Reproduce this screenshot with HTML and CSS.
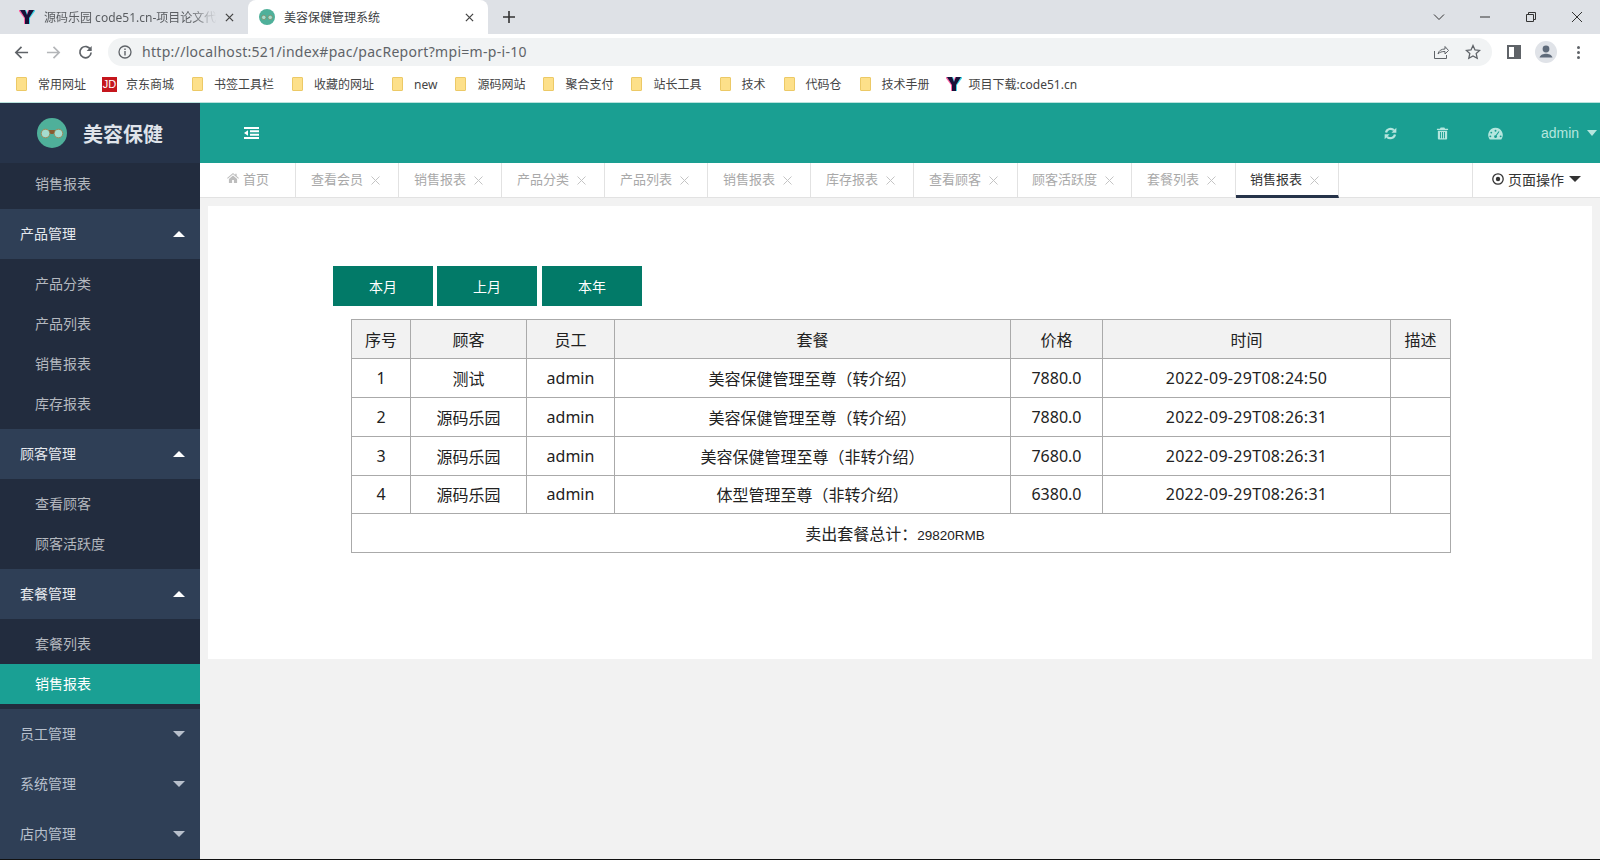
FILE: index.html
```html
<!DOCTYPE html>
<html lang="en">
<head>
    <meta charset="UTF-8">
    <meta name="viewport" content="width=device-width, initial-scale=1.0">
    <title>美容保健管理系统</title>
    <link rel="stylesheet" href="styles.css">
</head>
<body>

    <!-- Browser tabs -->
    <div class="tabstrip">
        <div class="btab">
            <svg class="fav" viewBox="0 0 16 16"><path d="M0 1h6l2 5 2-5h6L10 9v6H6V9z" fill="#ff5fa0" transform="translate(-1 0)"/><path d="M0 1h6l2 5 2-5h6L10 9v6H6V9z" fill="#3fd6e8" transform="translate(1 0)"/><path d="M1 1h5l2 5 2-5h5L10 9v6H6V9z" fill="#1a1038"/></svg>
            <span class="btab-title fade">源码乐园 code51.cn-项目论文代码</span>
            <svg class="btab-x" viewBox="0 0 10 10"><path d="M1 1l8 8M9 1l-8 8" stroke="#444" stroke-width="1.4"/></svg>
        </div>
        <div class="btab btab-on">
            <svg class="fav" viewBox="0 0 16 16"><circle cx="8" cy="8" r="8" fill="#4fb09a"/><circle cx="4.800" cy="8.400" r="2.200" fill="#a5dccf" stroke="#8a7a50" stroke-width=".6"/><circle cx="11.200" cy="8.400" r="2.200" fill="#a5dccf" stroke="#8a7a50" stroke-width=".6"/></svg>
            <span class="btab-title">美容保健管理系统</span>
            <svg class="btab-x" viewBox="0 0 10 10"><path d="M1 1l8 8M9 1l-8 8" stroke="#444" stroke-width="1.4"/></svg>
        </div>
        <svg class="newtab" viewBox="0 0 12 12"><path d="M6 0v12M0 6h12" stroke="#333" stroke-width="1.6"/></svg>
        <div class="winbtns">
            <svg viewBox="0 0 12 12" class="win"><path d="M1 3.500l5 5 5-5" fill="none" stroke="#333"/></svg>
            <svg viewBox="0 0 12 12" class="win"><path d="M1 6h10" stroke="#333"/></svg>
            <svg viewBox="0 0 12 12" class="win"><path d="M1.500 3.500h7v7h-7zM3.500 3.500v-2h7v7h-2" fill="none" stroke="#333"/></svg>
            <svg viewBox="0 0 12 12" class="win"><path d="M1 1l10 10M11 1L1 11" stroke="#333"/></svg>
        </div>
    </div>

    <!-- Address bar -->
    <div class="toolbar">
        <svg class="nav-ico" viewBox="0 0 16 16"><path d="M15 8H2M8 2L2 8l6 6" fill="none" stroke="#5f6368" stroke-width="1.8"/></svg>
        <svg class="nav-ico" viewBox="0 0 16 16"><path d="M1 8h13M8 2l6 6-6 6" fill="none" stroke="#b4b6b9" stroke-width="1.8"/></svg>
        <svg class="nav-ico" viewBox="0 0 16 16"><path d="M13.500 5.200A6 6 0 1 0 14 8" fill="none" stroke="#5f6368" stroke-width="1.8"/><path d="M14.600 1v5.400H9.200z" fill="#5f6368"/></svg>
        <div class="omnibox">
            <svg class="info" viewBox="0 0 14 14"><circle cx="7" cy="7" r="6" fill="none" stroke="#5f6368" stroke-width="1.3"/><path d="M7 6v4.400M7 3.400v1.600" stroke="#5f6368" stroke-width="1.4"/></svg>
            <span class="url">http://localhost:521/index#pac/pacReport?mpi=m-p-i-10</span>
            <svg class="omni-ico" viewBox="0 0 16 16"><path d="M1.500 7v7.500h12V11M5 10c.6-3.300 3.400-5 7-5V2.500L15.500 6.500 12 10V7.500c-3 0-5.400.6-7 2.500z" fill="none" stroke="#5f6368"/></svg>
            <svg class="omni-ico" viewBox="0 0 16 16"><path d="M8 1.500l2 4.400 4.700.5-3.500 3.200 1 4.700L8 11.900l-4.200 2.400 1-4.700L1.300 6.400 6 5.900z" fill="none" stroke="#5f6368" stroke-width="1.300"/></svg>
        </div>
        <div class="sidepanel"></div>
        <div class="avatar"><svg viewBox="0 0 22 22"><circle cx="11" cy="8" r="3.400" fill="#5f6b7a"/><path d="M4.500 16.500c1-3 4-3.800 6.500-3.800s5.500.8 6.500 3.800z" fill="#5f6b7a"/></svg></div>
        <div class="kebab"><i></i><i></i><i></i></div>
    </div>

    <!-- Bookmarks -->
    <div class="bookmarks">
        <span class="bm"><i class="folder"></i>常用网址</span>
        <span class="bm bm-jd"><i class="jd">JD</i>京东商城</span>
        <span class="bm"><i class="folder"></i>书签工具栏</span>
        <span class="bm"><i class="folder"></i>收藏的网址</span>
        <span class="bm"><i class="folder"></i>new</span>
        <span class="bm"><i class="folder"></i>源码网站</span>
        <span class="bm"><i class="folder"></i>聚合支付</span>
        <span class="bm"><i class="folder"></i>站长工具</span>
        <span class="bm"><i class="folder"></i>技术</span>
        <span class="bm"><i class="folder"></i>代码仓</span>
        <span class="bm"><i class="folder"></i>技术手册</span>
        <span class="bm bm-y"><svg class="fav" viewBox="0 0 16 16"><path d="M0 1h6l2 5 2-5h6L10 9v6H6V9z" fill="#ff5fa0" transform="translate(-1 0)"/><path d="M0 1h6l2 5 2-5h6L10 9v6H6V9z" fill="#3fd6e8" transform="translate(1 0)"/><path d="M1 1h5l2 5 2-5h5L10 9v6H6V9z" fill="#1a1038"/></svg>项目下载:code51.cn</span>
    </div>

    <div class="app">
        <!-- Sidebar -->
        <div class="sidebar">
            <div class="logo">
                <svg class="logo-img" viewBox="0 0 30 30">
                    <circle cx="15" cy="15" r="15" fill="#4fb09a"/>
                    <circle cx="8.500" cy="15.500" r="4.300" fill="#a5dccf" stroke="#a08a5a" stroke-width="1"/>
                    <circle cx="21.500" cy="15.500" r="4.300" fill="#a5dccf" stroke="#a08a5a" stroke-width="1"/>
                    <path d="M12 12h6l-1.500 4h-3z" fill="#8a5a30"/>
                </svg>
                <span>美容保健</span>
            </div>
            <div class="submenu submenu-first">
                <div class="subitem">销售报表</div>
            </div>
            <div class="group group-open">产品管理<i class="arrow-up"></i></div>
            <div class="submenu">
                <div class="subitem">产品分类</div>
                <div class="subitem">产品列表</div>
                <div class="subitem">销售报表</div>
                <div class="subitem">库存报表</div>
            </div>
            <div class="group group-open">顾客管理<i class="arrow-up"></i></div>
            <div class="submenu">
                <div class="subitem">查看顾客</div>
                <div class="subitem">顾客活跃度</div>
            </div>
            <div class="group group-open">套餐管理<i class="arrow-up"></i></div>
            <div class="submenu">
                <div class="subitem">套餐列表</div>
                <div class="subitem subitem-on">销售报表</div>
            </div>
            <div class="group">员工管理<i class="arrow-down"></i></div>
            <div class="group">系统管理<i class="arrow-down"></i></div>
            <div class="group">店内管理<i class="arrow-down"></i></div>
        </div>

        <div class="main">
            <!-- Top bar -->
            <div class="topbar">
                <svg class="collapse" viewBox="0 0 15 12"><path d="M0 0h15v2H0zM6 3.300h9v2H6zM6 6.700h9v2H6zM0 10h15v2H0zM4 3.300v5.400L0 6z" fill="#fff"/></svg>
                <div class="top-right">
                    <svg class="top-ico" viewBox="0 0 14 14"><path d="M2.200 6A5 5 0 0 1 10.800 3.600M11.800 8a5 5 0 0 1-8.600 2.400" fill="none" stroke="#b5e6de" stroke-width="2.400"/><path d="M13.300 .8v5.400H8zM.7 13.200V7.800H6z" fill="#b5e6de"/></svg>
                    <svg class="top-ico" viewBox="0 0 14 14"><path d="M5 .6h4l.8 1.400H13v1.200H1V2h3.200zM2 4h10v8.500a1 1 0 0 1-1 1H3a1 1 0 0 1-1-1zM4.300 5.500v6.500h1V5.500zM6.500 5.500v6.500h1V5.500zM8.700 5.500v6.500h1V5.500z" fill="#b5e6de" fill-rule="evenodd"/></svg>
                    <svg class="top-ico top-ico-wide" viewBox="0 0 16 13"><path d="M8 .5a7.700 7.700 0 0 0-6.200 12.300h12.400A7.700 7.700 0 0 0 8 .5zM8 2.500a1 1 0 1 1 0 2 1 1 0 0 1 0-2zM3.500 4.500a1 1 0 1 1 0 2 1 1 0 0 1 0-2zM2.500 8.500a1 1 0 1 1 0 2 1 1 0 0 1 0-2zM13.500 8.500a1 1 0 1 1 0 2 1 1 0 0 1 0-2zM11.300 4l.9.500-3 4.300a1.500 1.500 0 1 1-1-.5z" fill="#b5e6de" fill-rule="evenodd"/></svg>
                    <span class="user">admin<i class="caret"></i></span>
                </div>
            </div>

            <!-- Page tabs -->
            <div class="pagetabs">
                <div class="ptab ptab-home"><svg class="home" viewBox="0 0 13 11"><path d="M6.500 0L0 5.500l.7.800L6.500 1.500l5.800 4.800.7-.8L10.500 3.400V.8H9v1.300zM2 6.500V11h3.500V7.800h2V11H11V6.500L6.500 2.800z" fill="#bdbdbd"/></svg>首页</div>
                <div class="ptab">查看会员<svg class="close" viewBox="0 0 9 9"><path d="M.5.500l8 8M8.500.500l-8 8"/></svg></div>
                <div class="ptab">销售报表<svg class="close" viewBox="0 0 9 9"><path d="M.5.500l8 8M8.500.500l-8 8"/></svg></div>
                <div class="ptab">产品分类<svg class="close" viewBox="0 0 9 9"><path d="M.5.500l8 8M8.500.500l-8 8"/></svg></div>
                <div class="ptab">产品列表<svg class="close" viewBox="0 0 9 9"><path d="M.5.500l8 8M8.500.500l-8 8"/></svg></div>
                <div class="ptab">销售报表<svg class="close" viewBox="0 0 9 9"><path d="M.5.500l8 8M8.500.500l-8 8"/></svg></div>
                <div class="ptab">库存报表<svg class="close" viewBox="0 0 9 9"><path d="M.5.500l8 8M8.500.500l-8 8"/></svg></div>
                <div class="ptab ptab-w1">查看顾客<svg class="close" viewBox="0 0 9 9"><path d="M.5.500l8 8M8.500.500l-8 8"/></svg></div>
                <div class="ptab ptab-w2">顾客活跃度<svg class="close" viewBox="0 0 9 9"><path d="M.5.500l8 8M8.500.500l-8 8"/></svg></div>
                <div class="ptab ptab-w1">套餐列表<svg class="close" viewBox="0 0 9 9"><path d="M.5.500l8 8M8.500.500l-8 8"/></svg></div>
                <div class="ptab ptab-on">销售报表<svg class="close" viewBox="0 0 9 9"><path d="M.5.500l8 8M8.500.500l-8 8"/></svg></div>
                <div class="page-ops">
                    <svg viewBox="0 0 12 12" class="dot"><circle cx="6" cy="6" r="5.200" fill="none" stroke="#333" stroke-width="1.300"/><circle cx="6" cy="6" r="2.200" fill="#333"/></svg>
                    页面操作<i class="caret-dark"></i>
                </div>
            </div>

            <div class="content">
                <div class="card">
                    <div class="btns">
                        <button type="button" class="btn">本月</button>
                        <button type="button" class="btn">上月</button>
                        <button type="button" class="btn btn-last">本年</button>
                    </div>
                    <table class="report">
                        <colgroup>
                            <col class="c1"><col class="c2"><col class="c3"><col class="c4"><col class="c5"><col class="c6"><col class="c7">
                        </colgroup>
                        <tr class="head">
                            <th>序号</th><th>顾客</th><th>员工</th><th>套餐</th><th>价格</th><th>时间</th><th>描述</th>
                        </tr>
                        <tr>
                            <td>1</td><td>测试</td><td>admin</td><td>美容保健管理至尊&#xFF08;转介绍&#xFF09;</td><td>7880.0</td><td class="time">2022-09-29T08:24:50</td><td></td>
                        </tr>
                        <tr>
                            <td>2</td><td>源码乐园</td><td>admin</td><td>美容保健管理至尊&#xFF08;转介绍&#xFF09;</td><td>7880.0</td><td class="time">2022-09-29T08:26:31</td><td></td>
                        </tr>
                        <tr>
                            <td>3</td><td>源码乐园</td><td>admin</td><td>美容保健管理至尊&#xFF08;非转介绍&#xFF09;</td><td>7680.0</td><td class="time">2022-09-29T08:26:31</td><td></td>
                        </tr>
                        <tr class="row-short">
                            <td>4</td><td>源码乐园</td><td>admin</td><td>体型管理至尊&#xFF08;非转介绍&#xFF09;</td><td>6380.0</td><td class="time">2022-09-29T08:26:31</td><td></td>
                        </tr>
                        <tr class="row-total">
                            <td colspan="7">卖出套餐总计&#xFF1A;<span class="total">29820RMB</span></td>
                        </tr>
                    </table>
                </div>
            </div>
        </div>
    </div>

</body>
</html>
```

FILE: styles.css
```css
* {
    box-sizing: border-box;
}

html, body {
    margin: 0;
    height: 860px;
    overflow: hidden;
}

body {
    font-family: "Noto Sans", "Noto Sans CJK SC", sans-serif;
    background-color: #f2f2f2;
    color: #333;
    border-bottom: 1px solid #111;
}

i, b {
    font-style: normal;
    font-weight: normal;
}

/* browser tabs */
.tabstrip {
    height: 34px;
    background-color: #dee1e6;
    display: flex;
    align-items: center;
    padding-left: 8px;
}

.btab {
    width: 240px;
    height: 34px;
    display: flex;
    align-items: center;
    padding: 0 8px 0 11px;
    font-size: 12px;
    color: #5a5d61;
}

.btab-on {
    background-color: #fff;
    color: #3c4043;
    border-radius: 8px 8px 0 0;
}

.fav {
    width: 16px;
    height: 16px;
    flex: none;
}

.btab-title {
    margin-left: 9px;
    flex: 1;
    white-space: nowrap;
    overflow: hidden;
}

.fade {
    -webkit-mask-image: linear-gradient(to right, #000 85%, transparent);
    mask-image: linear-gradient(to right, #000 85%, transparent);
}

.btab-x {
    width: 9px;
    height: 9px;
    margin: 0 6px 0 8px;
    flex: none;
}

.newtab {
    width: 12px;
    height: 12px;
    margin-left: 15px;
}

.winbtns {
    margin-left: auto;
    display: flex;
    gap: 34px;
    padding-right: 17px;
}

.win {
    width: 12px;
    height: 12px;
}

/* address bar */
.toolbar {
    height: 32px;
    background-color: #fff;
    display: flex;
    align-items: flex-end;
    padding-left: 14px;
}

.nav-ico {
    width: 15px;
    height: 15px;
    margin: 0 17px 6px 0;
    flex: none;
}

.omnibox {
    width: 1384px;
    height: 28px;
    margin-left: -2px;
    background-color: #f1f3f4;
    border-radius: 14px;
    display: flex;
    align-items: center;
    padding: 0 11px 0 10px;
}

.info {
    width: 14px;
    height: 14px;
    flex: none;
}

.url {
    margin-left: 10px;
    padding-bottom: 2px;
    font-size: 14px;
    color: #5f6368;
    flex: 1;
    letter-spacing: .3px;
}

.omni-ico {
    width: 16px;
    height: 16px;
    margin-left: 16px;
}

.sidepanel {
    width: 14px;
    height: 14px;
    margin: 0 0 7px 15px;
    border: 2px solid #5f6368;
    border-right-width: 7px;
}

.avatar {
    width: 22px;
    height: 22px;
    margin: 0 0 3px 14px;
    border-radius: 50%;
    background-color: #e0e3e8;
}

.avatar svg {
    width: 22px;
    height: 22px;
    display: block;
}

.kebab {
    margin: 0 0 7px 20px;
    display: flex;
    flex-direction: column;
    gap: 2px;
}

.kebab i {
    width: 3px;
    height: 3px;
    border-radius: 50%;
    background-color: #5f6368;
}

/* bookmarks */
.bookmarks {
    height: 37px;
    background-color: #fff;
    border-bottom: 1px solid #b9e2dd;
    display: flex;
    align-items: center;
    padding-left: 16px;
    gap: 18px;
    font-size: 12px;
    color: #444;
}

.bm {
    display: flex;
    align-items: center;
    white-space: nowrap;
}

.bm-jd {
    margin-left: -2px;
}

.bm-y {
    margin-left: -2px;
}

.folder {
    width: 11px;
    height: 14px;
    margin-right: 11px;
    background-color: #fde08a;
    border: 1px solid #ecc966;
    border-radius: 1px;
}

.jd {
    width: 15px;
    height: 15px;
    margin-right: 9px;
    background-color: #c5161d;
    color: #fff;
    font-family: "Liberation Sans", sans-serif;
    font-size: 11px;
    line-height: 15px;
    text-align: center;
}

.bm-y .fav {
    margin-right: 7px;
}

/* app */
.app {
    display: flex;
    height: 756px;
}

.sidebar {
    width: 200px;
    flex: none;
    background-color: #222c3e;
    overflow: hidden;
}

.logo {
    height: 60px;
    background-color: #263349;
    display: flex;
    align-items: center;
    padding-left: 37px;
    color: #dfe3ea;
    font-size: 20px;
    font-weight: bold;
}

.logo-img {
    width: 30px;
    height: 30px;
    margin-right: 16px;
}

.submenu {
    padding: 5px 0;
}

.submenu-first {
    padding-top: 1px;
}

.subitem {
    height: 40px;
    line-height: 39px;
    padding-left: 35px;
    font-size: 14px;
    color: #b4b8bf;
}

.subitem-on {
    background-color: #1aa094;
    color: #fff;
}

.group {
    height: 50px;
    line-height: 50px;
    padding: 0 15px 0 20px;
    background-color: #2f3f56;
    font-size: 14px;
    color: #b8c0cc;
    display: flex;
    align-items: center;
    justify-content: space-between;
}

.group-open {
    color: #e6e9ee;
}

.arrow-up {
    border: 6px solid transparent;
    border-top: 0;
    border-bottom-color: #fff;
}

.arrow-down {
    border: 6px solid transparent;
    border-bottom: 0;
    border-top-color: #b8c0cc;
}

.main {
    flex: 1;
    min-width: 0;
}

.topbar {
    height: 60px;
    background-color: #1a9f92;
    display: flex;
    align-items: center;
    padding-left: 44px;
}

.collapse {
    width: 15px;
    height: 12px;
}

.top-right {
    margin-left: auto;
    display: flex;
    align-items: center;
}

.top-ico {
    width: 13px;
    height: 13px;
    margin-right: 39px;
}

.top-ico-wide {
    width: 15px;
}

.user {
    font-family: "Liberation Sans", sans-serif;
    font-size: 14px;
    color: #b5e6de;
    margin-right: 3px;
    display: flex;
    align-items: center;
    margin-left: -1px;
    width: 56px;
    justify-content: space-between;
}

.caret {
    border: 5px solid transparent;
    border-bottom: 0;
    border-top: 6px solid #b5e6de;
}

/* page tabs */
.pagetabs {
    height: 35px;
    background-color: #fff;
    border-bottom: 1px solid #e2e2e2;
    display: flex;
    font-size: 13px;
    color: #a9a9a9;
}

.ptab {
    width: 103px;
    height: 34px;
    padding: 0 0 4px 15px;
    display: flex;
    align-items: center;
    border-right: 1px solid #e2e2e2;
    white-space: nowrap;
}

.close {
    width: 9px;
    height: 9px;
    margin: 4px 0 0 8px;
    fill: none;
    stroke: #c4c4c4;
    stroke-width: 1;
}

.ptab-home {
    width: 96px;
    padding-left: 27px;
}

.home {
    width: 12px;
    height: 10px;
    margin-right: 4px;
}

.ptab-w1 {
    width: 104px;
}

.ptab-w2 {
    width: 114px;
    padding-left: 14px;
}

.ptab-on {
    color: #333;
    height: 35px;
    border-bottom: 3px solid #263349;
    padding: 0 0 2px 14px;
    width: 103px;
}

.page-ops {
    margin-left: auto;
    width: 128px;
    height: 34px;
    border-left: 1px solid #e2e2e2;
    display: flex;
    align-items: center;
    padding: 0 0 2px 19px;
    color: #333;
    font-size: 14px;
}

.dot {
    width: 12px;
    height: 12px;
    margin-right: 4px;
}

.caret-dark {
    margin-left: 5px;
    border: 6px solid transparent;
    border-bottom: 0;
    border-top: 6px solid #333;
}

/* content */
.content {
    padding: 8px;
}

.card {
    height: 453px;
    background-color: #fff;
    padding: 60px 0 0 125px;
}

.btns {
    display: flex;
    gap: 4px;
}

.btn {
    width: 100px;
    height: 40px;
    border: 0;
    background-color: #027a68;
    color: #fff;
    font-family: inherit;
    font-size: 14px;
    padding: 0;
}

.btn-last {
    margin-left: 1px;
}

.report {
    width: 1100px;
    margin: 13px 0 0 18px;
    border-collapse: collapse;
    table-layout: fixed;
    font-size: 16px;
    color: #222;
}

.c1 { width: 59px; }
.c2 { width: 116px; }
.c3 { width: 88px; }
.c4 { width: 396px; }
.c5 { width: 92px; }
.c6 { width: 288px; }
.c7 { width: 60px; }

.report th,
.report td {
    height: 39px;
    padding: 0;
    border: 1px solid #aaa;
    text-align: center;
    font-weight: normal;
}

.head th {
    background-color: #f2f2f2;
}

.report .time {
    letter-spacing: .3px;
}

.report .row-short td {
    height: 38px;
    padding-bottom: 2px;
}

.report .row-total td {
    height: 39px;
    padding: 0 12px 1px 0;
    font-size: 16px;
}

.total {
    font-family: "Liberation Sans", sans-serif;
    font-size: 13.5px;
}
```
